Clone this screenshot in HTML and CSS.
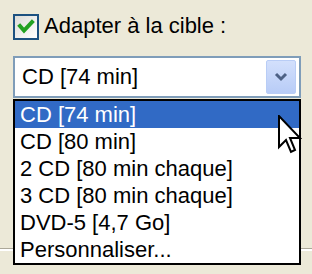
FILE: index.html
```html
<!DOCTYPE html>
<html>
<head>
<meta charset="utf-8">
<link rel="stylesheet" href="styles.css">
</head>
<body>
<div class="panel">
  <div class="check-row">
    <span class="checkbox">
      <svg width="22" height="22" viewBox="0 0 22 22"><path d="M5 10 L9 14.5 L17 6" fill="none" stroke="#21A121" stroke-width="4" stroke-linecap="square"/></svg>
    </span>
    <span class="label">Adapter à la cible :</span>
  </div>
  <div class="combo">
    <span class="combo-text">CD [74 min]</span>
    <span class="combo-btn">
      <svg width="14" height="10" viewBox="0 0 14 10"><path d="M2 2 L7 7 L12 2" fill="none" stroke="#4D6185" stroke-width="3"/></svg>
    </span>
  </div>
  <div class="separator"></div>
  <ul class="list">
    <li class="item selected">CD [74 min]</li>
    <li class="item">CD [80 min]</li>
    <li class="item">2 CD [80 min chaque]</li>
    <li class="item">3 CD [80 min chaque]</li>
    <li class="item">DVD-5 [4,7 Go]</li>
    <li class="item">Personnaliser...</li>
  </ul>
  <svg class="cursor" width="24" height="40" viewBox="0 0 12 20"><path d="M0.5 0.5 L0.5 16 L4 12.5 L6.5 18.5 L8.5 17.5 L6 11.5 L11 11.5 Z" fill="#fff" stroke="#000" stroke-width="1" stroke-linejoin="miter"/></svg>
</div>
</body>
</html>
```
FILE: styles.css
```css
html, body {
  margin: 0;
  padding: 0;
}
body {
  background: #ECE9D8;
  font-family: "Liberation Sans", Arial, sans-serif;
  font-size: 22px;
  color: #000;
}
.panel {
  position: relative;
  width: 312px;
  height: 274px;
  overflow: hidden;
  padding-top: 13px;
  box-sizing: border-box;
}
.check-row {
  display: flex;
  align-items: center;
  gap: 5px;
  padding-left: 13px;
  height: 27px;
}
.checkbox {
  width: 22px;
  height: 22px;
  border: 2px solid #1C5180;
  background: linear-gradient(135deg, #DCDCD7, #FFFFFF);
  display: flex;
}
.label {
  line-height: 27px;
  position: relative;
  top: -1px;
}
.combo {
  margin: 16px 0 0 13px;
  width: 288px;
  height: 42px;
  box-sizing: border-box;
  border: 2px solid #7F9DB9;
  background: #fff;
  display: flex;
  align-items: center;
  justify-content: space-between;
  padding: 0 3px 0 7px;
}
.combo-text {
  line-height: 38px;
}
.combo-btn {
  width: 30px;
  height: 34px;
  box-sizing: border-box;
  border: 1px solid #B9CDF6;
  border-radius: 2px;
  background: linear-gradient(#D3E0FC, #B8CCF7);
  display: flex;
  align-items: center;
  justify-content: center;
}
.separator {
  margin-top: 150px;
  height: 1px;
  background: #ACA899;
  border-bottom: 2px solid #FFFFFF;
}
.list {
  position: absolute;
  top: 99px;
  left: 13px;
  width: 288px;
  margin: 0;
  padding: 0;
  list-style: none;
  box-sizing: border-box;
  border: 2px solid #000;
  background: #fff;
}
.item {
  height: 27px;
  line-height: 27px;
  padding-left: 5px;
  white-space: nowrap;
}
.item.selected {
  background: #316AC5;
  color: #fff;
}
.cursor {
  position: absolute;
  left: 278px;
  top: 115px;
}
```
